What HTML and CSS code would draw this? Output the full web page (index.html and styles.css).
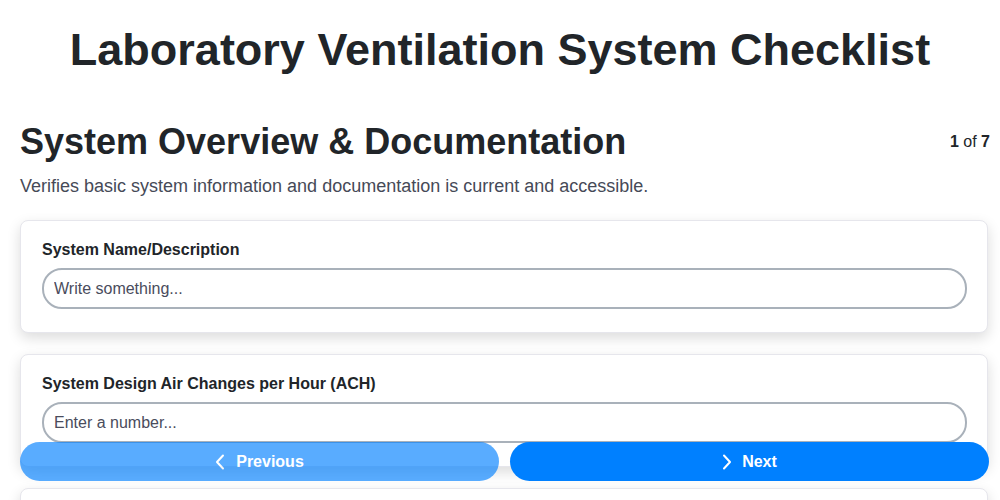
FILE: index.html
```html
<!DOCTYPE html>
<html lang="en">
<head>
<meta charset="utf-8">
<title>Laboratory Ventilation System Checklist</title>
<link rel="stylesheet" href="styles.css">
</head>
<body>
<h1 class="title">Laboratory Ventilation System Checklist</h1>
<main class="page">
  <div class="section-head">
    <h2 class="section-title">System Overview &amp; Documentation</h2>
    <div class="counter"><b>1</b> of <b>7</b></div>
  </div>
  <p class="section-desc">Verifies basic system information and documentation is current and accessible.</p>

  <div class="card">
    <label class="field-label" for="f1">System Name/Description</label>
    <input class="field-input" id="f1" type="text" placeholder="Write something...">
  </div>
  <div class="card">
    <label class="field-label" for="f2">System Design Air Changes per Hour (ACH)</label>
    <input class="field-input" id="f2" type="text" placeholder="Enter a number...">
  </div>
  <div class="card">
    <label class="field-label" for="f3">Date of Last Certification</label>
    <input class="field-input" id="f3" type="text" placeholder="Select a date...">
  </div>
</main>
<nav class="nav-bar">
  <button class="nav-btn prev" disabled>
    <svg class="chev" width="10" height="16" viewBox="0 0 10 16"><path d="M8 1.5 L2 8 L8 14.5" fill="none" stroke="#fff" stroke-width="2" stroke-linecap="round" stroke-linejoin="round"/></svg>
    <span>Previous</span>
  </button>
  <button class="nav-btn next">
    <svg class="chev" width="10" height="16" viewBox="0 0 10 16"><path d="M2 1.5 L8 8 L2 14.5" fill="none" stroke="#fff" stroke-width="2" stroke-linecap="round" stroke-linejoin="round"/></svg>
    <span>Next</span>
  </button>
</nav>
</body>
</html>
```
FILE: styles.css
```css
* { box-sizing: border-box; }
html, body { margin: 0; padding: 0; background: #fff; }
body {
  font-family: "Liberation Sans", Arial, sans-serif;
  color: #212529;
  overflow: hidden;
}
.title {
  margin: 24px 0 0;
  text-align: center;
  font-size: 45px;
  font-weight: 700;
  line-height: 52px;
}
.page {
  padding: 0 10px 100px 20px;
}
.section-head {
  display: flex;
  justify-content: space-between;
  align-items: center;
  margin-top: 45px;
}
.section-title {
  margin: 0;
  font-size: 36px;
  line-height: 42px;
  font-weight: 700;
}
.counter {
  font-size: 16px;
}
.section-desc {
  margin: 12px 0 23px;
  font-size: 18px;
  line-height: 22px;
  color: #464a57;
}
.card {
  margin: 0 2px 21px 0;
  padding: 20px 20px 23px 21px;
  border: 1px solid #e6e6ec;
  border-radius: 8px;
  background: #fff;
  box-shadow: 0 5px 14px rgba(0, 0, 0, 0.14);
}
.field-label {
  display: block;
  font-size: 16px;
  font-weight: 700;
  line-height: 18px;
  margin-bottom: 9px;
}
.field-input {
  display: block;
  width: 100%;
  height: 41px;
  padding: 0 10px;
  border: 2px solid #a9b1ba;
  border-radius: 20px;
  font-family: "Liberation Sans", Arial, sans-serif;
  font-size: 16px;
  color: #212529;
  background: #fff;
  outline: none;
}
.field-input::placeholder { color: #4a4c5c; opacity: 1; }
.nav-bar {
  position: fixed;
  left: 20px;
  right: 11px;
  bottom: 19px;
  display: flex;
  gap: 11px;
}
.nav-btn {
  flex: 1;
  height: 39px;
  border: none;
  border-radius: 20px;
  background: #0080ff;
  color: #fff;
  font-family: "Liberation Sans", Arial, sans-serif;
  font-size: 16px;
  font-weight: 700;
  display: flex;
  align-items: center;
  justify-content: center;
  gap: 10px;
  padding: 0;
}
.nav-btn.prev { opacity: 0.65; gap: 11px; }
.chev { display: block; }
```
